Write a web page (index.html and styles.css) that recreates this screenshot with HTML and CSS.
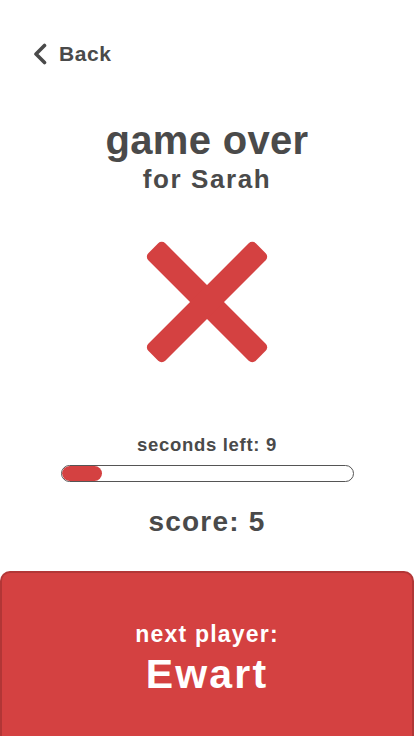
FILE: index.html
```html
<!DOCTYPE html>
<html>
<head>
<meta charset="utf-8">
<link rel="stylesheet" href="styles.css">
</head>
<body>
<div class="screen">
  <div class="topbar">
    <a class="back">
      <svg class="chev" width="14" height="22" viewBox="0 0 14 22"><path d="M11.5 2.5 L3 11 L11.5 19.5" fill="none" stroke="#4a4a4a" stroke-width="3.6" stroke-linecap="round" stroke-linejoin="round"/></svg>
      <span>Back</span>
    </a>
  </div>
  <div class="title">
    <div class="t1">game over</div>
    <div class="t2">for Sarah</div>
  </div>
  <div class="cross">
    <svg width="128" height="128" viewBox="0 0 128 128">
      <g transform="translate(64 64) rotate(45)">
        <rect x="-76" y="-12" width="152" height="24" rx="5" fill="#d44141"/>
        <rect x="-12" y="-76" width="24" height="152" rx="5" fill="#d44141"/>
      </g>
    </svg>
  </div>
  <div class="timer">
    <div class="secs">seconds left: 9</div>
    <div class="bar"><div class="fill" style="width:14%"></div></div>
    <div class="score">score: 5</div>
  </div>
  <div class="next">
    <div class="n1">next player:</div>
    <div class="n2">Ewart</div>
  </div>
</div>
</body>
</html>
```
FILE: styles.css
```css
html, body {
  margin: 0;
  padding: 0;
  background: #ffffff;
}
body {
  font-family: "Liberation Sans", Arial, sans-serif;
  font-weight: bold;
  color: #4a4a4a;
  width: 414px;
  height: 736px;
  overflow: hidden;
}
.screen {
  display: flex;
  flex-direction: column;
  align-items: center;
  height: 736px;
}
.topbar {
  align-self: stretch;
  padding: 42px 0 0 33px;
  height: 24px;
}
.back {
  display: flex;
  align-items: center;
  gap: 12px;
  font-size: 21px;
  letter-spacing: 0.6px;
  color: #4a4a4a;
}
.chev { display: block; }
.title {
  margin-top: 52px;
  text-align: center;
}
.t1 {
  font-size: 40px;
  line-height: 44px;
  letter-spacing: 0.3px;
}
.t2 {
  font-size: 26px;
  line-height: 30px;
  letter-spacing: 1.6px;
  margin-top: 2px;
}
.cross {
  margin-top: 44px;
  height: 128px;
}
.cross svg { display: block; }
.timer {
  margin-top: 68px;
  display: flex;
  flex-direction: column;
  align-items: center;
}
.secs {
  font-size: 18.5px;
  line-height: 22px;
  letter-spacing: 0.7px;
}
.bar {
  margin-top: 9px;
  width: 291px;
  height: 15px;
  border: 1px solid #555;
  border-radius: 9px;
  overflow: hidden;
  background: #fff;
}
.fill {
  height: 100%;
  background: #d44141;
  border-radius: 9px;
}
.score {
  margin-top: 24px;
  font-size: 28px;
  line-height: 32px;
  letter-spacing: 1.2px;
}
.next {
  margin-top: auto;
  align-self: stretch;
  height: 165px;
  box-sizing: border-box;
  background: #d44141;
  border: 2px solid #b23636;
  border-bottom: none;
  border-radius: 10px 10px 0 0;
  color: #ffffff;
  text-align: center;
  padding-top: 47px;
}
.n1 {
  font-size: 23px;
  line-height: 28px;
  letter-spacing: 1.2px;
}
.n2 {
  font-size: 41px;
  line-height: 44px;
  letter-spacing: 2.2px;
  margin-top: 4px;
}
```
